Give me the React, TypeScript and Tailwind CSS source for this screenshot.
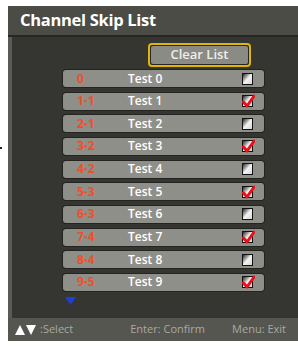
import React from "react";

const rows = [
  { n: "0", name: "Test 0", c: false },
  { n: "1-1", name: "Test 1", c: true },
  { n: "2-1", name: "Test 2", c: false },
  { n: "3-2", name: "Test 3", c: true },
  { n: "4-2", name: "Test 4", c: false },
  { n: "5-3", name: "Test 5", c: true },
  { n: "6-3", name: "Test 6", c: false },
  { n: "7-4", name: "Test 7", c: true },
  { n: "8-4", name: "Test 8", c: false },
  { n: "9-5", name: "Test 9", c: true },
];

function Box({ checked }: { checked: boolean }) {
  return (
    <div className="relative w-[11px] h-[12px] border border-[#111] bg-gradient-to-br from-[#2e2e2e] via-[#f4f4f4] to-[#d8d8d8]">
      {checked && (
        <svg className="absolute left-[-1px] top-[-2px]" width="13" height="14" viewBox="0 0 13 14">
          <path d="M1.5 8 L5 12 L12 2" stroke="#e8101a" strokeWidth="3" fill="none" strokeLinecap="round" strokeLinejoin="round" />
        </svg>
      )}
    </div>
  );
}

export default function App() {
  return (
    <div className="relative w-[298px] h-[346px] bg-white" style={{ fontFamily: '"Open Sans", "DejaVu Sans", sans-serif' }}>
      <div className="absolute left-0 top-[147px] w-[2px] h-[2px] bg-[#222]" />
      <div className="pt-[6px] pl-[8px]">
        <div className="w-[290px] h-[335px] flex flex-col">
          <div className="h-[29px] bg-[#4b4c46] pl-[12px] flex items-center text-white font-bold text-[16.5px] tracking-[-0.3px]">
            Channel Skip List
          </div>
          <div className="h-[2px] bg-[#262623]" />
          <div className="flex-1 border-l-[4px] border-[#5a5b55] bg-[#353531] flex flex-col">
            <div className="pt-[6px] flex">
              <div className="ml-[136px] w-[103px] h-[24px] rounded-[4px] border-[2px] border-[#e2b30c] p-[1px] bg-[#262623]">
                <div className="w-full h-full rounded-[2px] bg-[#8b8b86] flex items-center justify-center text-[#eeeeea] text-[13px] font-semibold">
                  Clear List
                </div>
              </div>
            </div>
            <div className="mt-[3px] ml-[51px] w-[201px] flex flex-col gap-[5.67px]">
              {rows.map((r) => (
                <div key={r.name} className="h-[17px] rounded-[3px] bg-[#8f8f8a] shadow-[0_0_0_1px_#232320] flex items-center pl-[14px] pr-[11px]">
                  <div className="w-[51px] text-[#ec4f2c] font-bold text-[12px] leading-none">{r.n}</div>
                  <div className="flex-1 text-white font-semibold text-[12px] leading-none">{r.name}</div>
                  <Box checked={r.c} />
                </div>
              ))}
            </div>
            <div className="ml-[53px] mt-[6px]">
              <svg width="11" height="8" viewBox="0 0 11 8">
                <polygon points="0,0 11,0 5.5,8" fill="#1f3fd8" />
              </svg>
            </div>
          </div>
          <div className="h-[23px] bg-[#55564f] flex items-center text-[11px] text-[#a9a9a2] pl-[7px] pr-[12px]">
            <svg width="21" height="10" viewBox="0 0 21 10">
              <polygon points="0,10 10,10 5,0" fill="#ffffff" />
              <polygon points="11,0 21,0 16,10" fill="#ffffff" />
            </svg>
            <span className="ml-[4px]">:Select</span>
            <span className="ml-[57px]">Enter: Confirm</span>
            <span className="ml-auto">Menu: Exit</span>
          </div>
        </div>
      </div>
    </div>
  );
}
